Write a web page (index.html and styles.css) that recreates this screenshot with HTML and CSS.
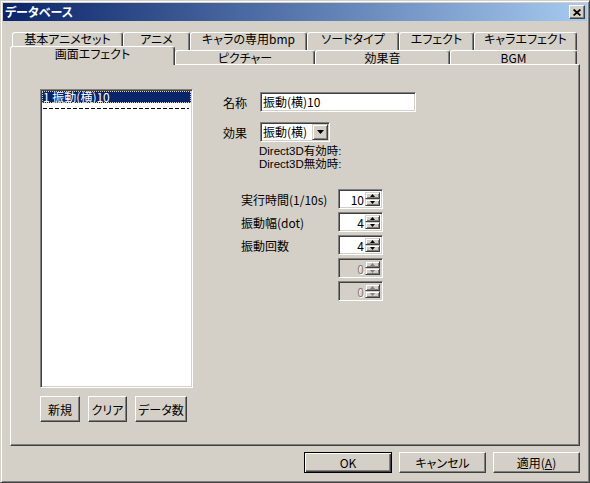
FILE: index.html
```html
<!DOCTYPE html>
<html lang="ja">
<head>
<meta charset="utf-8">
<title>データベース</title>
<link rel="stylesheet" href="styles.css">
</head>
<body>
<div class="window">
  <div class="titlebar">
    <span class="title">データベース</span>
    <span class="close"><svg width="8" height="7" viewBox="0 0 8 7"><path d="M0.6 0.5L7.4 6.5M7.4 0.5L0.6 6.5" stroke="#000" stroke-width="1.7"/></svg></span>
  </div>
  <div class="content">
    <div class="tabstrip">
      <div class="row row1">
        <div class="tab t-basic">基本アニメセット</div>
        <div class="tab t-anime">アニメ</div>
        <div class="tab t-bmp">キャラの専用bmp</div>
        <div class="tab t-sword">ソードタイプ</div>
        <div class="tab t-effect">エフェクト</div>
        <div class="tab t-chareff">キャラエフェクト</div>
      </div>
      <div class="row row2">
        <div class="tab sel t-screen">画面エフェクト</div>
        <div class="tab t-pic">ピクチャー</div>
        <div class="tab t-se">効果音</div>
        <div class="tab t-bgm">BGM</div>
      </div>
    </div>
    <div class="panel">
      <div class="leftcol">
        <div class="listbox">
          <div class="item sel">1 振動(横)10</div>
          <div class="dashes"></div>
        </div>
        <div class="btnrow">
          <button class="btn b-new">新規</button>
          <button class="btn b-clear">クリア</button>
          <button class="btn b-count">データ数</button>
        </div>
      </div>
      <div class="rightcol">
        <div class="frow">
          <span class="lbl">名称</span>
          <div class="textbox">振動(横)10</div>
        </div>
        <div class="frow frow2">
          <span class="lbl">効果</span>
          <div class="combo">
            <span class="combo-text">振動(横)</span>
            <span class="dd"><svg width="7" height="4" viewBox="0 0 7 4"><path d="M0 0h7L3.5 4z" fill="#000"/></svg></span>
          </div>
        </div>
        <div class="d3d">
          <div>Direct3D有効時:</div>
          <div>Direct3D無効時:</div>
        </div>
        <div class="spins">
          <div class="srow">
            <span class="slbl">実行時間(1/10s)</span>
            <div class="spin"><span class="sval">10</span><span class="arrows"><span class="arr"><svg width="5" height="3" viewBox="0 0 5 3"><path d="M2.5 0L5 3H0z" fill="#000"/></svg></span><span class="arr"><svg width="5" height="3" viewBox="0 0 5 3"><path d="M0 0h5L2.5 3z" fill="#000"/></svg></span></span></div>
          </div>
          <div class="srow">
            <span class="slbl">振動幅(dot)</span>
            <div class="spin"><span class="sval">4</span><span class="arrows"><span class="arr"><svg width="5" height="3" viewBox="0 0 5 3"><path d="M2.5 0L5 3H0z" fill="#000"/></svg></span><span class="arr"><svg width="5" height="3" viewBox="0 0 5 3"><path d="M0 0h5L2.5 3z" fill="#000"/></svg></span></span></div>
          </div>
          <div class="srow">
            <span class="slbl">振動回数</span>
            <div class="spin"><span class="sval">4</span><span class="arrows"><span class="arr"><svg width="5" height="3" viewBox="0 0 5 3"><path d="M2.5 0L5 3H0z" fill="#000"/></svg></span><span class="arr"><svg width="5" height="3" viewBox="0 0 5 3"><path d="M0 0h5L2.5 3z" fill="#000"/></svg></span></span></div>
          </div>
          <div class="srow">
            <span class="slbl"></span>
            <div class="spin disabled"><span class="sval">0</span><span class="arrows"><span class="arr"><svg width="5" height="3" viewBox="0 0 5 3"><path d="M2.5 0L5 3H0z" fill="#808080"/></svg></span><span class="arr"><svg width="5" height="3" viewBox="0 0 5 3"><path d="M0 0h5L2.5 3z" fill="#808080"/></svg></span></span></div>
          </div>
          <div class="srow">
            <span class="slbl"></span>
            <div class="spin disabled"><span class="sval">0</span><span class="arrows"><span class="arr"><svg width="5" height="3" viewBox="0 0 5 3"><path d="M2.5 0L5 3H0z" fill="#808080"/></svg></span><span class="arr"><svg width="5" height="3" viewBox="0 0 5 3"><path d="M0 0h5L2.5 3z" fill="#808080"/></svg></span></span></div>
          </div>
        </div>
      </div>
    </div>
    <div class="footer">
      <button class="btn fbtn default">OK</button>
      <button class="btn fbtn">キャンセル</button>
      <button class="btn fbtn">適用(<u>A</u>)</button>
    </div>
  </div>
</div>
</body>
</html>
```
FILE: styles.css
```css
* { box-sizing: border-box; }
html, body { margin: 0; padding: 0; }
body {
  width: 590px;
  height: 483px;
  overflow: hidden;
  background: #D4D0C8;
  font-family: "Noto Sans CJK JP", sans-serif;
  font-feature-settings: "palt";
  font-size: 12px;
  color: #000;
}
.window {
  width: 590px;
  height: 483px;
  background: #D4D0C8;
  border: 1px solid;
  border-color: #D4D0C8 #404040 #404040 #D4D0C8;
  box-shadow: inset 1px 1px #fff, inset -1px -1px #808080;
  padding: 2px;
  display: flex;
  flex-direction: column;
}
.titlebar {
  height: 18px;
  flex: none;
  background: linear-gradient(to right, #0A246A, #A6CAF0);
  display: flex;
  align-items: center;
  justify-content: space-between;
  padding: 0 2px 0 2px;
  color: #fff;
  font-weight: bold;
}
.title { line-height: 18px; }
.close {
  width: 16px;
  height: 14px;
  background: #D4D0C8;
  border: 1px solid;
  border-color: #fff #404040 #404040 #fff;
  box-shadow: inset -1px -1px #808080;
  display: flex;
  align-items: center;
  justify-content: center;
}
.close svg { display: block; margin-left: -1px; }
.content {
  padding: 11px 7px 0 7px;
  display: flex;
  flex-direction: column;
}
.tabstrip { padding: 0 3px 0 2px; }
.row { display: flex; }
.row1 { height: 18px; }
.row2 { height: 15px; margin-bottom: -1px; align-items: flex-start; }
.tab {
  height: 18px;
  border: 1px solid;
  border-bottom: none;
  border-color: #fff #404040 transparent #fff;
  box-shadow: inset -1px 0 #808080;
  border-radius: 3px 3px 0 0;
  text-align: center;
  line-height: 13px;
  background: #D4D0C8;
  white-space: nowrap;
}
.row1 .tab { line-height: 12px; }
.row2 .tab { height: 14px; }
.row2 .tab.sel {
  height: 19px;
  margin-top: -4px;
  margin-left: -2px;
  position: relative;
  z-index: 1;
}
.t-basic { width: 111px; }
.t-anime { width: 67px; }
.t-bmp { width: 117px; }
.t-sword { width: 92px; }
.t-effect { width: 75px; }
.t-chareff { width: 103px; }
.t-screen { width: 165px; }
.t-pic { width: 140px; }
.t-se { width: 135px; }
.t-bgm { width: 127px; }

.panel {
  height: 382px;
  border: 1px solid;
  border-color: #fff #404040 #404040 #fff;
  box-shadow: inset -1px -1px #808080;
  display: flex;
  padding: 24px 0 0 29px;
}
.leftcol {
  width: 153px;
  display: flex;
  flex-direction: column;
}
.listbox {
  height: 299px;
  background: #fff;
  border: 1px solid;
  border-color: #808080 #fff #fff #808080;
  box-shadow: inset 1px 1px #404040, inset -1px -1px #D4D0C8;
  padding: 1px;
}
.item {
  height: 12px;
  line-height: 12px;
  white-space: nowrap;
  padding-left: 1px;
}
.item.sel {
  background: #0A246A;
  color: #fff;
  outline: 1px dotted #D4D0C8;
  outline-offset: -1px;
}
.dashes {
  margin: 5px 2px 0 1px;
  height: 1px;
  background: repeating-linear-gradient(to right, #000 0 4px, transparent 4px 6px);
}
.btnrow {
  display: flex;
  gap: 8px;
  margin-top: 8px;
}
.btn {
  font: inherit;
  color: #000;
  background: #D4D0C8;
  border: 1px solid;
  border-color: #fff #404040 #404040 #fff;
  box-shadow: inset -1px -1px #808080;
  padding: 0;
  margin: 0;
  text-align: center;
  white-space: nowrap;
}
.btnrow .btn { height: 26px; }
.b-new { width: 40px; }
.b-clear { width: 39px; }
.b-count { width: 52px; }

.rightcol {
  margin-left: 30px;
  padding-top: 3px;
  display: flex;
  flex-direction: column;
}
.frow {
  display: flex;
  align-items: center;
  height: 20px;
}
.frow2 { margin-top: 10px; }
.lbl { width: 37px; }
.textbox, .combo, .spin {
  height: 20px;
  background: #fff;
  border: 1px solid;
  border-color: #808080 #fff #fff #808080;
  box-shadow: inset 1px 1px #404040, inset -1px -1px #D4D0C8;
}
.textbox {
  width: 156px;
  padding: 1px 2px;
  line-height: 16px;
  white-space: nowrap;
}
.combo {
  width: 70px;
  padding: 1px;
  display: flex;
  align-items: center;
  justify-content: space-between;
}
.combo-text { padding-left: 1px; line-height: 16px; white-space: nowrap; }
.dd {
  width: 16px;
  height: 16px;
  background: #D4D0C8;
  border: 1px solid;
  border-color: #D4D0C8 #404040 #404040 #D4D0C8;
  box-shadow: inset 1px 1px #fff, inset -1px -1px #808080;
  display: flex;
  align-items: center;
  justify-content: center;
}
.dd svg { display: block; }
.d3d {
  margin: 3px 0 0 36px;
  font-family: "Liberation Sans", "Noto Sans CJK JP", sans-serif;
  font-feature-settings: normal;
  font-size: 11.5px;
  line-height: 13px;
  color: #000;
}
.spins {
  margin-top: 18px;
  padding-left: 18px;
  display: flex;
  flex-direction: column;
  gap: 3px;
}
.srow {
  display: flex;
  align-items: center;
  height: 20px;
}
.slbl { width: 97px; white-space: nowrap; }
.spin {
  width: 45px;
  padding: 2px;
  display: flex;
}
.sval {
  flex: 1;
  text-align: right;
  line-height: 16px;
  padding-right: 1px;
}
.arrows {
  width: 15px;
  display: flex;
  flex-direction: column;
}
.arr {
  height: 8px;
  background: #D4D0C8;
  border: 1px solid;
  border-color: #D4D0C8 #404040 #404040 #D4D0C8;
  box-shadow: inset 1px 1px #fff, inset -1px -1px #808080;
  display: flex;
  align-items: center;
  justify-content: center;
}
.arr svg { display: block; }
.spin.disabled { background: #D4D0C8; }
.spin.disabled .sval { color: #808080; text-shadow: 1px 1px #fff; }

.footer {
  display: flex;
  justify-content: flex-end;
  gap: 7px;
  padding: 6px 0 0 0;
}
.fbtn { width: 87px; height: 21px; line-height: 17px; }
.fbtn.default {
  width: 88px;
  border-color: #000;
  box-shadow: inset 1px 1px #fff, inset -1px -1px #404040, inset -2px -2px #808080;
}
u { text-underline-offset: 1px; }
```
